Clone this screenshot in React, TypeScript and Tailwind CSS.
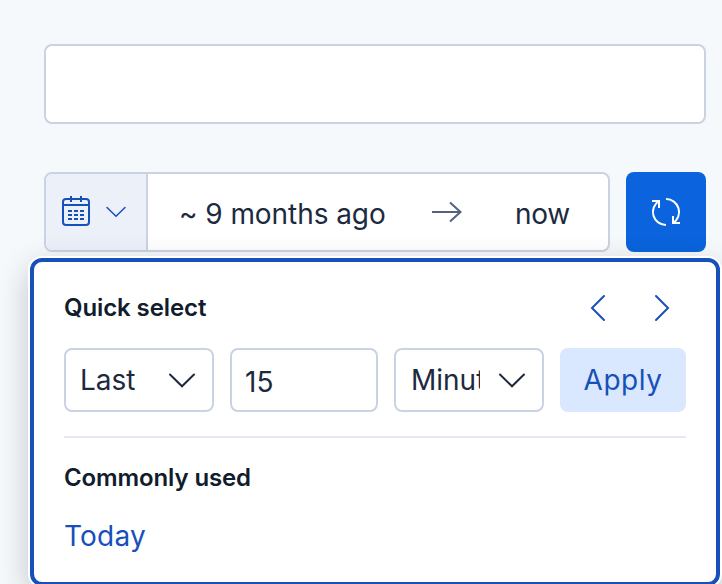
import type { ReactNode } from "react";

function Icon({ children, className = "" }: { children: ReactNode; className?: string }) {
  return (
    <svg
      viewBox="0 0 32 32"
      className={`h-8 w-8 shrink-0 ${className}`}
      fill="none"
      stroke="currentColor"
      strokeWidth="2"
    >
      {children}
    </svg>
  );
}

function ChevronDown() {
  return (
    <Icon>
      <path d="M4 10.5 16 22.3 28 10.5" strokeLinecap="round" />
    </Icon>
  );
}

function SelectBox({ label, textClass = "" }: { label: string; textClass?: string }) {
  return (
    <div className="flex h-16 w-[150px] items-center rounded-lg border-2 border-[#cad3e2] bg-white pr-[14px] pl-[14px]">
      <span className={`w-[70px] overflow-hidden whitespace-nowrap ${textClass}`}>{label}</span>
      <span className="ml-auto flex">
        <ChevronDown />
      </span>
    </div>
  );
}

export default function App() {
  return (
    <div className="relative h-[584px] w-[722px] overflow-hidden bg-[#f5f9fc] pt-11 pl-11 font-['Inter',sans-serif] text-[28px] leading-10 text-[#1d2a3e]">
      <div className="h-20 w-[662px] rounded-lg border-2 border-[#cad3e2] bg-white" />

      <div className="mt-12 flex gap-4">
        <div className="flex h-20 w-[566px] overflow-hidden rounded-lg border-2 border-[#cad3e2] bg-white">
          <button className="flex w-[102px] items-center border-r-2 border-[#cad3e2] bg-[#ecf0f9] pl-[14px] text-[#1750ba]">
            <Icon>
              <rect x="3" y="3" width="26" height="26" rx="3" />
              <path d="M3 9H29M11 0V6M21 0V6" />
              <path d="M8 15h4m2 0h4m2 0h4M8 19h4m2 0h4m2 0h4M8 23h4m2 0h4m2 0h4" />
            </Icon>
            <svg viewBox="0 0 24 24" className="ml-3 h-6 w-6" fill="none" stroke="currentColor" strokeWidth="1.5">
              <path d="M3 7.5 12 16.3 21 7.5" strokeLinecap="round" />
            </svg>
          </button>
          <div className="flex flex-1 items-center pt-1 pl-[31px]">
            <span className="w-[251px] whitespace-nowrap tracking-[-0.06px]">~ 9 months ago</span>
            <Icon className="-mt-1 text-[#516381]">
              <path d="M2 16H30M20 6.5 30.5 16 20 25.5" />
            </Icon>
            <span className="ml-[53px] tracking-[-0.3px]">now</span>
          </div>
        </div>
        <button className="flex h-20 w-20 items-center justify-center rounded-lg bg-[#0b64dd] text-white">
          <Icon>
            <path d="M16 29A13 13 0 0 1 9 5M16 3A13 13 0 0 1 23 27" />
            <path d="M2 5H9V12M30 27H23V20" />
          </Icon>
        </button>
      </div>

      <div className="absolute top-[258px] left-[30px] h-[328px] w-[690px] rounded-xl border-4 border-[#1750ba] bg-white px-[30px] pt-[26px] shadow-[0_0_0_2px_#fff,0_10px_32px_rgba(10,12,18,0.24)]">
        <div className="flex h-10 items-center justify-between">
          <h2 className="text-2xl font-semibold tracking-[-0.1px] text-[#111c2c]">Quick select</h2>
          <div className="flex gap-8 pr-2 text-[#1750ba]">
            <Icon>
              <path d="M22 4 10 16 22 28" strokeLinecap="round" />
            </Icon>
            <Icon>
              <path d="M10 4 22 16 10 28" strokeLinecap="round" />
            </Icon>
          </div>
        </div>

        <div className="mt-5 flex gap-4">
          <SelectBox label="Last" />
          <div className="flex h-16 w-[148px] items-center rounded-lg border-2 border-[#cad3e2] bg-white pt-1 pl-[13px]">
            15
          </div>
          <SelectBox label="Minutes" textClass="pl-px" />
          <button className="h-16 w-[126px] rounded-lg bg-[#d9e8ff] font-normal tracking-[0.5px] text-[#1750ba]">Apply</button>
        </div>

        <hr className="mt-6 border-t-2 border-[#e3e8f2]" />

        <h2 className="mt-5 text-2xl leading-10 font-semibold tracking-[-0.12px] text-[#111c2c]">Commonly used</h2>
        <button className="mt-[18px] block tracking-[0.2px] text-[#1750ba]">Today</button>
      </div>
    </div>
  );
}
